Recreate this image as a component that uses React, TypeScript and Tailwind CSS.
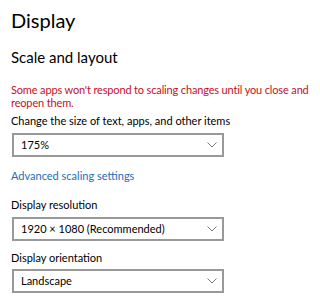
function Chevron() {
  return (
    <svg width="10" height="6" viewBox="0 0 10 6" className="shrink-0">
      <path d="M0.5 0.5 L5 5 L9.5 0.5" fill="none" stroke="#7a7a7a" strokeWidth="1" />
    </svg>
  );
}

function Dropdown({ value }: { value: string }) {
  return (
    <div className="w-[212px] h-[24px] border-2 border-[#999999] bg-white flex items-center justify-between pl-[7px] pr-[5px]">
      <span className="text-[11px] leading-[14px] text-[#000000]">{value}</span>
      <Chevron />
    </div>
  );
}

export default function App() {
  return (
    <div
      className="w-[320px] h-[300px] bg-white pl-[11px] pt-[6px] text-black overflow-hidden"
      style={{ fontFamily: 'Lato, "Noto Sans", sans-serif' }}
    >
      {/* Titulo */}
      <h1 className="text-[20px] leading-[28px] font-normal">Display</h1>

      <h2 className="mt-[13px] text-[15px] leading-[20px] font-normal">Scale and layout</h2>

      {/* Aviso */}
      <p className="mt-[16px] text-[11px] leading-[13px] tracking-[-0.15px] text-[#c50f1f]">
        Some apps won't respond to scaling changes until you close and reopen them.
      </p>

      <p className="mt-[5px] text-[11px] leading-[13px]">Change the size of text, apps, and other items</p>
      <div className="mt-[6px] ml-[1px]">
        <Dropdown value="175%" />
      </div>

      <p className="mt-[12px] text-[11px] leading-[13px] text-[#1a6fb5]">Advanced scaling settings</p>

      <p className="mt-[16px] text-[11px] leading-[13px]">Display resolution</p>
      <div className="mt-[6px] ml-[1px]">
        <Dropdown value="1920 × 1080 (Recommended)" />
      </div>

      <p className="mt-[10px] text-[11px] leading-[13px]">Display orientation</p>
      <div className="mt-[5px] ml-[1px]">
        <Dropdown value="Landscape" />
      </div>
    </div>
  );
}
